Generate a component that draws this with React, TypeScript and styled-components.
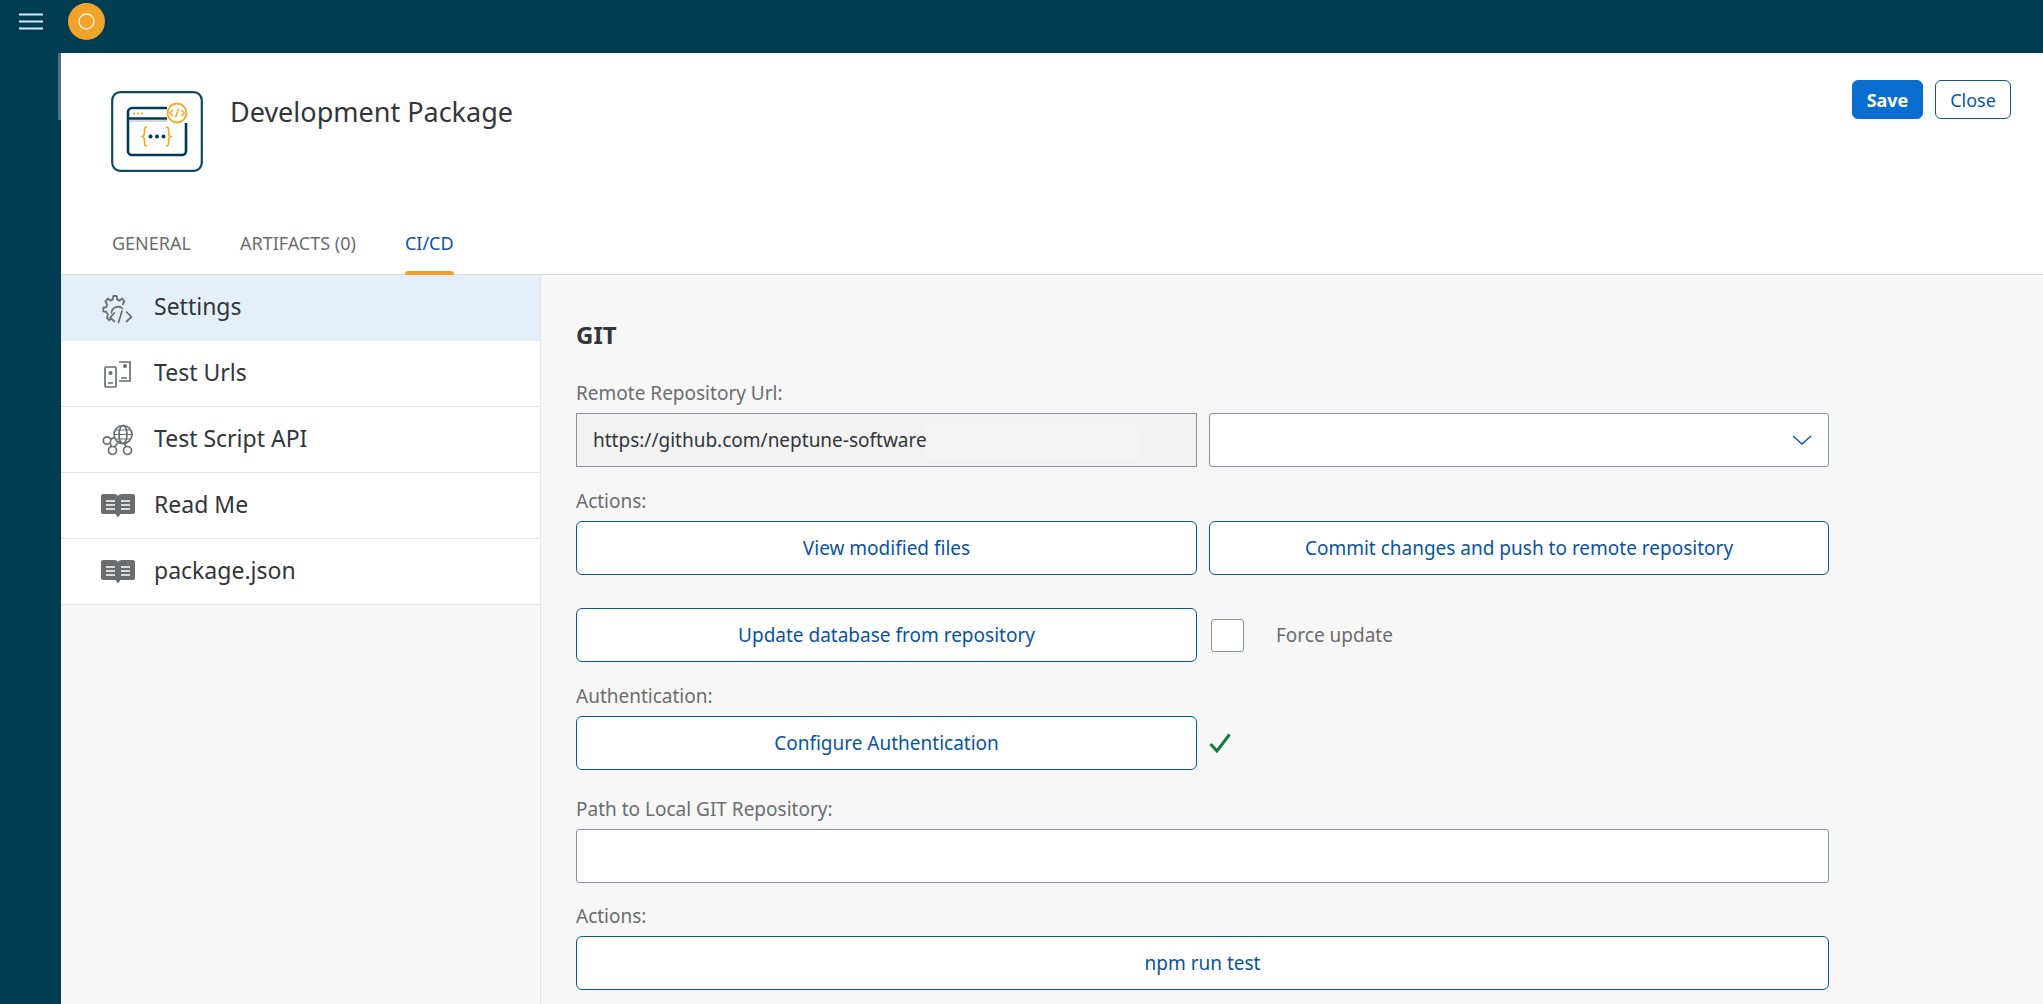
import styled, { createGlobalStyle } from "styled-components";

const GlobalStyle = createGlobalStyle`
  html, body {
    margin: 0;
    height: 100%;
    overflow: hidden;
    font-family: "Noto Sans", "Open Sans", sans-serif;
  }
  * {
    box-sizing: border-box;
  }
`;

const Page = styled.div`
  height: 100vh;
  display: flex;
  flex-direction: column;
  background: #f7f7f7;
`;

const TopBar = styled.header`
  flex: 0 0 53px;
  background: #013d52;
  display: flex;
  align-items: flex-start;
  padding: 3px 0 0 19px;
  gap: 25px;
`;

const MenuIcon = styled.svg`
  margin-top: 10px;
`;

const Body = styled.div`
  flex: 1;
  display: flex;
  min-height: 0;
`;

const Rail = styled.div`
  flex: 0 0 61px;
  background: #013d52;
  position: relative;

  &::after {
    content: "";
    position: absolute;
    top: 0;
    right: 0;
    width: 3px;
    height: 67px;
    background: #4a7081;
  }
`;

const Main = styled.main`
  flex: 1;
  display: flex;
  flex-direction: column;
  min-width: 0;
`;

const Header = styled.div`
  flex: 0 0 222px;
  background: #fff;
  display: flex;
  flex-direction: column;
`;

const HeaderTop = styled.div`
  flex: 1;
  display: flex;
  align-items: flex-start;
  padding: 38px 32px 0 50px;
`;

const Title = styled.h1`
  margin: 2px 0 0 27px;
  font-size: 27px;
  line-height: 38px;
  font-weight: 400;
  color: #32363a;
`;

const HeaderActions = styled.div`
  margin: -11px 0 0 auto;
  display: flex;
  gap: 12px;
`;

const HeaderButton = styled.button<{ $primary?: boolean }>`
  height: 39px;
  padding: 0;
  width: ${(p) => (p.$primary ? "71px" : "76px")};
  border: 1px solid ${(p) => (p.$primary ? "#0a6ed1" : "#0854a0")};
  border-radius: 6px;
  background: ${(p) => (p.$primary ? "#0a6ed1" : "#fff")};
  color: ${(p) => (p.$primary ? "#fff" : "#0854a0")};
  font: ${(p) => (p.$primary ? 700 : 400)} 18px "Noto Sans", sans-serif;
`;

const Tabs = styled.nav`
  display: flex;
  gap: 49px;
  padding-left: 51px;
  box-shadow: inset 0 -1px 0 #d9d9d9;
`;

const Tab = styled.div<{ $active?: boolean }>`
  position: relative;
  font-size: 18px;
  line-height: 24px;
  padding-bottom: 20px;
  color: ${(p) => (p.$active ? "#0854a0" : "#6a6d70")};

  &::after {
    content: "";
    display: ${(p) => (p.$active ? "block" : "none")};
    position: absolute;
    left: 0;
    right: 0;
    bottom: 0;
    height: 4px;
    border-radius: 3px 3px 0 0;
    background: #f0a32a;
  }
`;

const Split = styled.div`
  flex: 1;
  display: flex;
  min-height: 0;
`;

const Sidebar = styled.aside`
  flex: 0 0 480px;
  border-right: 1px solid #e5e5e5;
`;

const SideRow = styled.div<{ $active?: boolean }>`
  height: 66px;
  display: flex;
  align-items: center;
  padding-left: 40px;
  gap: 19px;
  font-size: 23px;
  color: #32363a;
  background: ${(p) => (p.$active ? "#e5eff9" : "#fff")};
  border-bottom: 1px solid ${(p) => (p.$active ? "#e5eff9" : "#e5e5e5")};
`;

const IconSlot = styled.span`
  flex: 0 0 34px;
  height: 34px;
  display: flex;
  align-items: center;
  justify-content: center;
`;

const RowLabel = styled.span`
  position: relative;
  top: -2px;
`;

const Content = styled.section`
  flex: 1;
  padding: 44px 0 0 35px;
  min-width: 0;
`;

const Section = styled.h2`
  margin: 0 0 30px;
  font-size: 24px;
  line-height: 32px;
  font-weight: 700;
  color: #32363a;
`;

const Form = styled.div`
  width: 1253px;
`;

const Label = styled.div<{ $gap?: number }>`
  margin-top: ${(p) => p.$gap ?? 0}px;
  margin-bottom: 8px;
  font-size: 19px;
  line-height: 24px;
  color: #6a6d70;
`;

const TwoCols = styled.div<{ $gap?: number }>`
  display: grid;
  grid-template-columns: 621px 620px;
  column-gap: 12px;
  align-items: center;
  margin-top: ${(p) => p.$gap ?? 0}px;
`;

const Field = styled.div<{ $readonly?: boolean }>`
  position: relative;
  height: 54px;
  display: flex;
  align-items: center;
  justify-content: space-between;
  padding: 0 16px;
  font-size: 19px;
  color: #32363a;
  border: 1px solid #89919a;
  border-radius: ${(p) => (p.$readonly ? 0 : "3px")};
  background: ${(p) => (p.$readonly ? "#f2f2f2" : "#fff")};
`;

const Smudge = styled.span`
  position: absolute;
  left: 349px;
  top: 12px;
  width: 213px;
  height: 34px;
  background: #f4f4f4;
`;

const ActionButton = styled.button`
  display: block;
  width: 100%;
  height: 54px;
  padding: 0;
  border: 1px solid #0854a0;
  border-radius: 6px;
  background: #fff;
  color: #0854a0;
  font: 400 19px "Noto Sans", sans-serif;
`;

const Inline = styled.div`
  display: flex;
  align-items: center;
`;

const Checkbox = styled.span`
  width: 33px;
  height: 33px;
  margin-left: 2px;
  background: #fff;
  border: 1px solid #89919a;
  border-radius: 3px;
`;

const CheckText = styled.span`
  margin-left: 32px;
  font-size: 19px;
  color: #6a6d70;
`;

const GearIcon = () => (
  <svg width="32" height="32" viewBox="0 0 32 32" fill="none" stroke="#6a6d70" strokeWidth="1.7" strokeLinejoin="round" strokeLinecap="round">
    <path d="M9 27.5 7 29 4.8 27l1-2.600-1.500-2.400-3-.5v-3l3-.6.7-2.300-1.700-2.600 2.300-2.300 2.600 1.600 2.300-.9.6-3h3.200l.6 3 2.300.9 2.500-1.600 2.300 2.300-1.600 2.500" transform="translate(0 -6) scale(1.02 1.18)" />
    <path d="M9.500 21a6.500 6.500 0 0 1 11-4.500" />
    <path d="M12.500 21 8 25.500l4.500 4M24.500 20 29.500 25l-5 4.500M20 19l-3.500 11.500" />
  </svg>
);

const DevicesIcon = () => (
  <svg width="32" height="30" viewBox="0 0 32 30" fill="none" stroke="#6a6d70" strokeWidth="1.700">
    <rect x="3" y="8" width="11" height="20" rx="1" />
    <path d="M17 3h11v19H17" />
    <path d="M6 24h5M19 19h6" />
    <circle cx="8.500" cy="14" r="1.200" fill="#6a6d70" />
    <circle cx="23" cy="7" r="1.200" fill="#6a6d70" />
  </svg>
);

const NetworkIcon = () => (
  <svg width="32" height="32" viewBox="0 0 32 32" fill="none" stroke="#6a6d70" strokeWidth="1.700">
    <circle cx="21" cy="10.500" r="9" />
    <ellipse cx="21" cy="10.500" rx="4" ry="9" />
    <path d="M12 10.500h18M13.500 6h15M13.500 15h15" strokeWidth="1.200" />
    <circle cx="5" cy="16.500" r="3.700" />
    <circle cx="10.500" cy="26.500" r="4" />
    <circle cx="25.500" cy="26.500" r="4" />
    <path d="M8.500 15.500 13 13M8 19l1.500 3.500M12.500 23l5-6M24 22.500l-2-3" />
  </svg>
);

const BookIcon = () => (
  <svg width="34" height="25" viewBox="0 0 34 25">
    <path d="M2 1h11c2 0 3.500.8 4 2 .5-1.200 2-2 4-2h11c1 0 2 1 2 2v16c0 1-1 2-2 2H19.500L17 24.500 14.500 21H2c-1 0-2-1-2-2V3c0-1 1-2 2-2z" fill="#6a6d70" />
    <path d="M5 8h9M5 12h9M5 16h9M20 8h9M20 12h9M20 16h9" stroke="#fff" strokeWidth="1.500" />
  </svg>
);

const sideItems = [
  { label: "Settings", icon: <GearIcon />, active: true },
  { label: "Test Urls", icon: <DevicesIcon /> },
  { label: "Test Script API", icon: <NetworkIcon /> },
  { label: "Read Me", icon: <BookIcon /> },
  { label: "package.json", icon: <BookIcon /> },
];

export default function App() {
  return (
    <Page>
      <GlobalStyle />
      <TopBar>
        <MenuIcon width="24" height="17" viewBox="0 0 24 17">
          <path d="M0 1.500h24M0 8.500h24M0 15.500h24" stroke="#d1e8ff" strokeWidth="2.200" />
        </MenuIcon>
        <svg width="37" height="37" viewBox="0 0 37 37">
          <circle cx="18.500" cy="18.500" r="18.500" fill="#f0a32a" />
          <circle cx="18.500" cy="18.500" r="7.500" fill="none" stroke="#fdf0dc" strokeWidth="1.400" />
        </svg>
      </TopBar>
      <Body>
        <Rail />
        <Main>
          <Header>
            <HeaderTop>
              <svg width="92" height="81" viewBox="0 0 92 81" fill="none">
                <rect x="1.200" y="1.200" width="89.600" height="78.600" rx="8" stroke="#0f4a5f" strokeWidth="2.200" />
                <path d="M56 17H21a4 4 0 0 0-4 4v39a4 4 0 0 0 4 4h50a4 4 0 0 0 4-4V32" stroke="#013d52" strokeWidth="2.600" />
                <path d="M17 27.500h39" stroke="#013d52" strokeWidth="2.600" />
                <path d="M18 30h38" stroke="#c5ced3" strokeWidth="1.500" />
                <path d="M22 22.500h2M26 22.500h2M30 22.500h2" stroke="#f5a623" strokeWidth="2" />
                <circle cx="66" cy="22" r="9.500" fill="#fff" stroke="#f5a623" strokeWidth="1.800" />
                <path d="M62 19l-3.300 3 3.300 3M70 19l3.300 3-3.300 3M67.500 17.500l-3 9" stroke="#f5a623" strokeWidth="1.500" />
                <path d="M36 36c-3 0-2.500 2-2.500 5 0 3-.5 4-2 4.500 1.500.5 2 1.500 2 4.500 0 3-.5 5 2.500 5M55 36c3 0 2.500 2 2.500 5 0 3 .5 4 2 4.500-1.500.5-2 1.500-2 4.500 0 3 .5 5-2.500 5" stroke="#f5a623" strokeWidth="1.600" />
                <circle cx="39.500" cy="45.500" r="2" fill="#013d52" />
                <circle cx="46" cy="45.500" r="2" fill="#013d52" />
                <circle cx="52.500" cy="45.500" r="2" fill="#013d52" />
              </svg>
              <Title>Development Package</Title>
              <HeaderActions>
                <HeaderButton $primary>Save</HeaderButton>
                <HeaderButton>Close</HeaderButton>
              </HeaderActions>
            </HeaderTop>
            <Tabs>
              <Tab>GENERAL</Tab>
              <Tab>ARTIFACTS (0)</Tab>
              <Tab $active>CI/CD</Tab>
            </Tabs>
          </Header>
          <Split>
            <Sidebar>
              {sideItems.map((item) => (
                <SideRow key={item.label} $active={item.active}>
                  <IconSlot>{item.icon}</IconSlot>
                  <RowLabel>{item.label}</RowLabel>
                </SideRow>
              ))}
            </Sidebar>
            <Content>
              <Section>GIT</Section>
              <Form>
                <Label>Remote Repository Url:</Label>
                <TwoCols>
                  <Field $readonly>
                    https://github.com/neptune-software
                    <Smudge />
                  </Field>
                  <Field>
                    <span />
                    <svg width="20" height="10" viewBox="0 0 20 10" fill="none">
                      <path d="M1 1l9 8 9-8" stroke="#0854a0" strokeWidth="1.400" />
                    </svg>
                  </Field>
                </TwoCols>
                <Label $gap={22}>Actions:</Label>
                <TwoCols>
                  <ActionButton>View modified files</ActionButton>
                  <ActionButton>Commit changes and push to remote repository</ActionButton>
                </TwoCols>
                <TwoCols $gap={33}>
                  <ActionButton>Update database from repository</ActionButton>
                  <Inline>
                    <Checkbox />
                    <CheckText>Force update</CheckText>
                  </Inline>
                </TwoCols>
                <Label $gap={22}>Authentication:</Label>
                <TwoCols>
                  <ActionButton>Configure Authentication</ActionButton>
                  <svg width="22" height="20" viewBox="0 0 22 20" fill="none">
                    <path d="M1.500 11l6.500 7L20.500 1.500" stroke="#107e3e" strokeWidth="3" />
                  </svg>
                </TwoCols>
                <Label $gap={27}>Path to Local GIT Repository:</Label>
                <Field />
                <Label $gap={21}>Actions:</Label>
                <ActionButton>npm run test</ActionButton>
              </Form>
            </Content>
          </Split>
        </Main>
      </Body>
    </Page>
  );
}
